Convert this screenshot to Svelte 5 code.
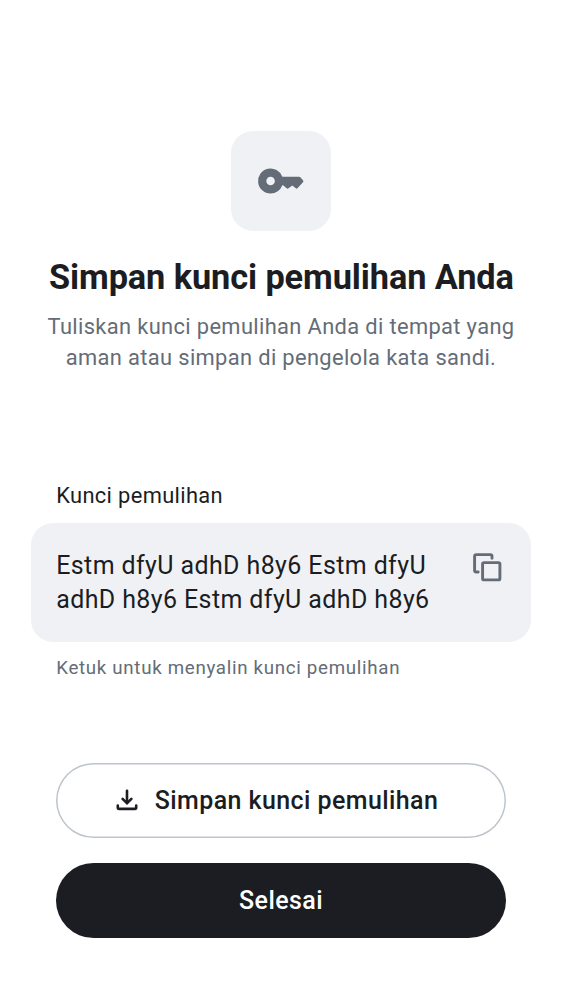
<script lang="ts">
  const recoveryKey = 'Estm dfyU adhD h8y6 Estm dfyU adhD h8y6 Estm dfyU adhD h8y6';
</script>

<main>
  <header>
    <div class="badge">
      <svg width="50" height="50" viewBox="0 0 24 24" aria-hidden="true">
        <path
          fill="currentColor"
          fill-rule="evenodd"
          d="M7 18a6 6 0 1 1 5.65-8H20.7q.4 0 .7.3l1.15 1.3q.45.5 0 1L19.9 15.5q-.4.4-.8 0L17.4 14.1l-1.8 1.4q-.45.35-.9 0L13 14.05H12.65A6 6 0 0 1 7 18Zm0-3.95a2.05 2.05 0 1 0 0-4.1a2.05 2.05 0 0 0 0 4.1Z"
        />
      </svg>
    </div>
    <h1>Simpan kunci pemulihan Anda</h1>
    <p>Tuliskan kunci pemulihan Anda di tempat yang aman atau simpan di pengelola kata sandi.</p>
  </header>

  <section>
    <span class="label">Kunci pemulihan</span>
    <button class="field">
      <span class="key">{recoveryKey}</span>
      <svg width="29" height="29" viewBox="0 0 29 29" fill="none" stroke="currentColor" stroke-width="2.9" aria-hidden="true">
        <path stroke-linecap="round" d="M5.2 19H3.2Q1.6 19 1.6 17.4V3.2Q1.6 1.6 3.2 1.6H17.4Q19 1.6 19 3.2V5.2" />
        <rect x="9.6" y="9.6" width="17.3" height="17.3" rx="1.4" />
      </svg>
    </button>
    <span class="hint">Ketuk untuk menyalin kunci pemulihan</span>
  </section>

  <footer>
    <button class="action outlined">
      <svg width="22" height="22" viewBox="0 0 22 22" fill="none" stroke="currentColor" stroke-width="2.6" stroke-linecap="round" aria-hidden="true">
        <path d="M11 1.7V13.7" />
        <path d="M6.6 9.9L11 14.2L15.4 9.9" />
        <path d="M1.8 16.5V18.6Q1.8 19.9 3.1 19.9H18.9Q20.2 19.9 20.2 18.6V16.5" />
      </svg>
      <span>Simpan kunci pemulihan</span>
    </button>
    <button class="action filled">Selesai</button>
  </footer>
</main>

<style>
  :global(body) {
    margin: 0;
    background: #fff;
  }
  main {
    box-sizing: border-box;
    width: 562px;
    height: 1000px;
    padding: 131px 31.2px 62.4px;
    display: flex;
    flex-direction: column;
    font-family: Roboto, sans-serif;
    color: #1b1d22;
  }
  button {
    font: inherit;
    color: inherit;
    border: 0;
    margin: 0;
    cursor: pointer;
  }
  header {
    display: flex;
    flex-direction: column;
    align-items: center;
    text-align: center;
  }
  .badge {
    width: 100px;
    height: 100px;
    border-radius: 22px;
    background: #f0f1f5;
    color: #646c77;
    display: flex;
    align-items: center;
    justify-content: center;
  }
  h1 {
    margin: 25px 0 0;
    padding-left: 0.8px;
    font-size: 34.34px;
    line-height: 43px;
    font-weight: 700;
    letter-spacing: -0.1px;
    white-space: nowrap;
  }
  p {
    margin: 12px 0 0;
    width: 480px;
    font-size: 21.86px;
    line-height: 31.2px;
    letter-spacing: 0.36px;
    color: #646c77;
  }
  section {
    margin-top: 106.2px;
    display: flex;
    flex-direction: column;
  }
  .label {
    padding-left: 25px;
    font-size: 21.86px;
    line-height: 31.2px;
    letter-spacing: 0.35px;
  }
  .field {
    margin-top: 11.8px;
    box-sizing: border-box;
    height: 119px;
    padding: 26px 29px 25px 25px;
    border-radius: 22px;
    background: #f0f1f5;
    display: flex;
    justify-content: space-between;
    align-items: flex-start;
    text-align: left;
  }
  .key {
    width: 385px;
    font-size: 24.98px;
    line-height: 34.3px;
    letter-spacing: 0.4px;
  }
  .field svg {
    margin-top: 4.4px;
    color: #646c77;
  }
  .hint {
    padding-left: 25px;
    margin-top: 12.4px;
    font-size: 18.73px;
    line-height: 28px;
    letter-spacing: 0.69px;
    color: #646c77;
  }
  footer {
    margin-top: auto;
    padding: 0 25px;
    display: flex;
    flex-direction: column;
    gap: 25px;
  }
  .action {
    box-sizing: border-box;
    height: 74.9px;
    border-radius: 37.5px;
    display: flex;
    align-items: center;
    justify-content: center;
    gap: 17px;
    font-size: 24.98px;
    font-weight: 500;
    letter-spacing: 0.43px;
  }
  .outlined {
    background: #fff;
    box-shadow: inset 0 0 0 1.5px #bdc4cc;
    padding: 0 14px 0 6px;
  }
  .filled {
    background: #1b1d22;
    color: #fff;
  }
</style>
